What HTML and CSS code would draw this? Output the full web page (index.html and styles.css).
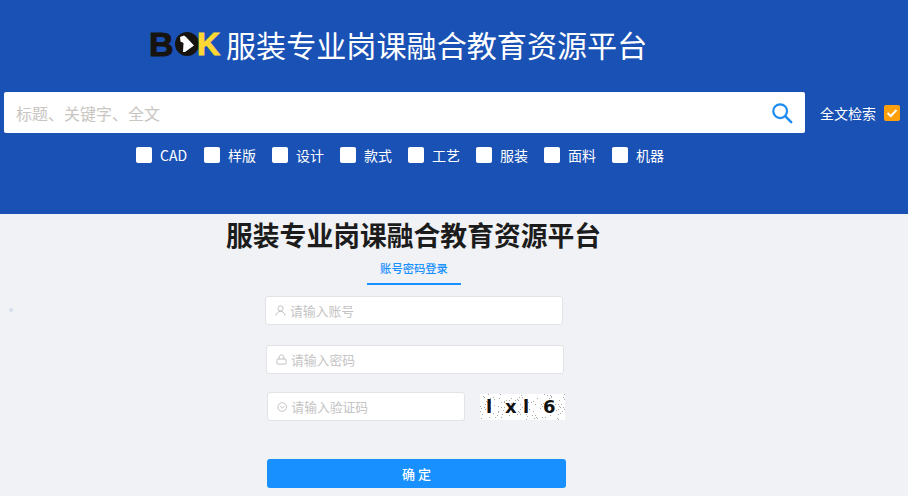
FILE: index.html
```html
<!DOCTYPE html>
<html lang="zh-CN">
<head>
    <meta charset="UTF-8">
    <meta name="viewport" content="width=device-width, initial-scale=1.0">
    <title>服装专业岗课融合教育资源平台</title>
    <link rel="stylesheet" href="styles.css">
</head>
<body>
    <!-- Search header -->
    <header class="banner">
        <div class="brand">
            <div class="logo">
                <span class="logo-b">B</span>
                <svg class="logo-o" viewBox="0 0 24 24" width="24" height="24">
                    <circle cx="12" cy="12" r="12" fill="#17130f"/>
                    <path d="M5 5 L9 3.500 L11 5 L19 13.500 L10 20 L8 20 L8.500 11 L5.500 9.500 Z" fill="#fff"/>
                </svg>
                <span class="logo-k">K</span>
            </div>
            <h1 class="brand-title">服装专业岗课融合教育资源平台</h1>
        </div>
        <div class="search-row">
            <div class="search-box">
                <input class="search-input" type="text" placeholder="标题、关键字、全文">
                <svg class="search-icon" viewBox="0 0 24 24" width="22" height="22">
                    <circle cx="10" cy="10" r="7.500" fill="none" stroke="#1e8cf0" stroke-width="2.400"/>
                    <path d="M15.500 15.500 L22 22" stroke="#1e8cf0" stroke-width="2.800" stroke-linecap="round"/>
                </svg>
            </div>
            <label class="fulltext">
                全文检索
                <span class="fulltext-check">
                    <svg viewBox="0 0 16 16" width="16" height="16">
                        <path d="M3.500 8 L6.800 11 L12.500 5" fill="none" stroke="#fff" stroke-width="2"/>
                    </svg>
                </span>
            </label>
        </div>
        <div class="filters">
            <label class="filter"><span class="box"></span>CAD</label>
            <label class="filter"><span class="box"></span>样版</label>
            <label class="filter"><span class="box"></span>设计</label>
            <label class="filter"><span class="box"></span>款式</label>
            <label class="filter"><span class="box"></span>工艺</label>
            <label class="filter"><span class="box"></span>服装</label>
            <label class="filter"><span class="box"></span>面料</label>
            <label class="filter"><span class="box"></span>机器</label>
        </div>
    </header>

    <!-- Login form -->
    <main class="login">
        <span class="speck"></span>
        <h2 class="login-title">服装专业岗课融合教育资源平台</h2>
        <div class="tab">账号密码登录</div>

        <div class="field field-user">
            <svg class="field-icon" viewBox="0 0 12 12" width="11" height="11">
                <circle cx="6" cy="3.800" r="2.800" fill="none" stroke="#bbb"/>
                <path d="M1 11.500 C1.500 8.500 3.500 7 6 7 C8.500 7 10.500 8.500 11 11.500" fill="none" stroke="#bbb"/>
            </svg>
            <input type="text" placeholder="请输入账号">
        </div>
        <div class="field field-pass">
            <svg class="field-icon" viewBox="0 0 12 12" width="11" height="11">
                <rect x="1" y="5.500" width="10" height="5.500" rx="1" fill="none" stroke="#bbb"/>
                <path d="M3.500 5.500 V3 C3.500 0.500 8.500 0.500 8.500 3 V5.500" fill="none" stroke="#bbb"/>
            </svg>
            <input type="password" placeholder="请输入密码">
        </div>
        <div class="code-row">
            <div class="field field-code">
                <svg class="field-icon" viewBox="0 0 12 12" width="12" height="12">
                    <circle cx="6" cy="6" r="5" fill="none" stroke="#bbb"/>
                    <path d="M3.500 5 L6 7.500 L8.500 5" fill="none" stroke="#bbb"/>
                </svg>
                <input type="text" placeholder="请输入验证码">
            </div>
            <div class="captcha">
                <svg class="captcha-noise" width="85" height="26" id="noise"></svg>
                <span class="digit digit-a">l</span><span class="digit digit-b">x</span><span class="digit digit-c">l</span><span class="digit digit-d">6</span>
            </div>
        </div>
        <button class="submit" type="button">确 定</button>
    </main>

    <script>
        // Scatter the speckle behind the captcha digits
        const noise = document.getElementById('noise');
        let seed = 7;
        let dots = '';
        for (let i = 0; i < 120; i++) {
            seed = (seed * 137 + 59) % 1009;
            const x = seed % 85;
            seed = (seed * 137 + 59) % 1009;
            const y = seed % 26;
            dots += '<rect x="' + x + '" y="' + y + '" width="1" height="1" fill="#aaa"/>';
        }
        noise.innerHTML = dots;
    </script>
</body>
</html>
```

FILE: styles.css
```css
/* General page styles */
body {
    margin: 0;
    height: 496px;
    overflow: hidden;
    background-color: #f0f2f5;
    font-family: "Noto Sans CJK SC", "Noto Sans", sans-serif;
}
input {
    border: 0;
    outline: 0;
    background: transparent;
    font-family: inherit;
}
input::placeholder {
    color: #c4c4c4;
}

/* Header with the search */
.banner {
    box-sizing: border-box;
    height: 214px;
    padding-top: 23px;
    background-color: #1a51b5;
    color: #fff;
}
.brand {
    display: flex;
    align-items: center;
    height: 42px;
    padding-left: 151px;
}
.logo {
    display: flex;
    align-items: center;
    width: 70px;
    height: 27px;
    font-family: "Liberation Sans", sans-serif;
    font-size: 34px;
    font-weight: bold;
    line-height: 27px;
}
.logo-b {
    width: 26px;
    margin-left: -2px;
    color: #17130f;
    -webkit-text-stroke: 1px #17130f;
}
.logo-o {
    flex: none;
}
.logo-k {
    width: 23px;
    margin-left: -2px;
    color: #fdd835;
    font-size: 32px;
    -webkit-text-stroke: 1px #fdd835;
}
.brand-title {
    margin: 0 0 0 5px;
    font-size: 30.100px;
    font-weight: 400;
    line-height: 42px;
    white-space: nowrap;
}
.search-row {
    display: flex;
    align-items: center;
    margin-top: 27px;
    padding-left: 4px;
}
.search-box {
    display: flex;
    align-items: center;
    box-sizing: border-box;
    width: 801px;
    height: 41px;
    padding: 0 12px 0 10px;
    background-color: #fff;
    border-radius: 2px;
}
.search-input {
    flex: 1;
    font-size: 16px;
}
.search-input::placeholder {
    color: #c9c6c2;
}
.fulltext {
    display: flex;
    align-items: center;
    margin-left: 15px;
    font-size: 14px;
}
.fulltext-check {
    display: flex;
    width: 16px;
    height: 16px;
    margin-left: 8px;
    background-color: #ff9f0a;
    border-radius: 2px;
}
.filters {
    display: flex;
    gap: 16px;
    margin-top: 13px;
    padding-left: 136px;
}
.filter {
    display: flex;
    align-items: center;
    width: 52px;
    height: 17px;
    font-size: 14px;
    white-space: nowrap;
}
.box {
    flex: none;
    width: 16px;
    height: 16px;
    margin-right: 8px;
    background-color: #fff;
    border-radius: 2px;
}

/* Login form */
.login {
    position: relative;
    display: flex;
    flex-direction: column;
    align-items: flex-start;
    padding-left: 265px;
}
.speck {
    position: absolute;
    top: 94px;
    left: 9px;
    width: 4px;
    height: 4px;
    border-radius: 50%;
    background-color: #d5deea;
}
.login-title {
    margin: 3px 0 0 -39px;
    color: #1c1c1c;
    font-size: 26.800px;
    font-weight: 700;
    line-height: 35px;
    white-space: nowrap;
}
.tab {
    box-sizing: border-box;
    width: 94px;
    height: 23px;
    margin: 10px 0 0 102px;
    border-bottom: 2px solid #1890ff;
    color: #1890ff;
    font-size: 11.300px;
    font-weight: 500;
    line-height: 12px;
    text-align: center;
}
.field {
    display: flex;
    align-items: center;
    box-sizing: border-box;
    width: 298px;
    height: 29px;
    padding-left: 9px;
    background-color: #fff;
    border: 1px solid #e2e3e6;
    border-radius: 3px;
}
.field input {
    width: 200px;
    margin-left: 4px;
    padding: 0;
    font-size: 12.800px;
}
.field-user {
    margin-top: 11px;
}
.field-pass {
    margin: 20px 0 0 1px;
}
.code-row {
    display: flex;
    align-items: center;
    margin: 18px 0 0 2px;
}
.field-code {
    width: 198px;
}
.captcha {
    position: relative;
    display: flex;
    align-items: center;
    box-sizing: border-box;
    width: 85px;
    height: 26px;
    margin-left: 15px;
    background-color: #fff;
    color: #111;
    font-family: "DejaVu Sans", sans-serif;
    font-size: 18px;
    font-weight: bold;
}
.digit {
    position: relative;
    width: 0;
}
.digit-a {
    margin-left: 6px;
}
.digit-b {
    margin-left: 19px;
}
.digit-c {
    margin-left: 18px;
}
.digit-d {
    margin-left: 20px;
}
.captcha-noise {
    position: absolute;
    top: 0;
    left: 0;
}
.submit {
    width: 299px;
    height: 29px;
    margin: 38px 0 0 2px;
    padding: 0;
    background-color: #1890ff;
    border: 0;
    border-radius: 3px;
    color: #fff;
    font-family: inherit;
    font-size: 13px;
    font-weight: 500;
}
```
